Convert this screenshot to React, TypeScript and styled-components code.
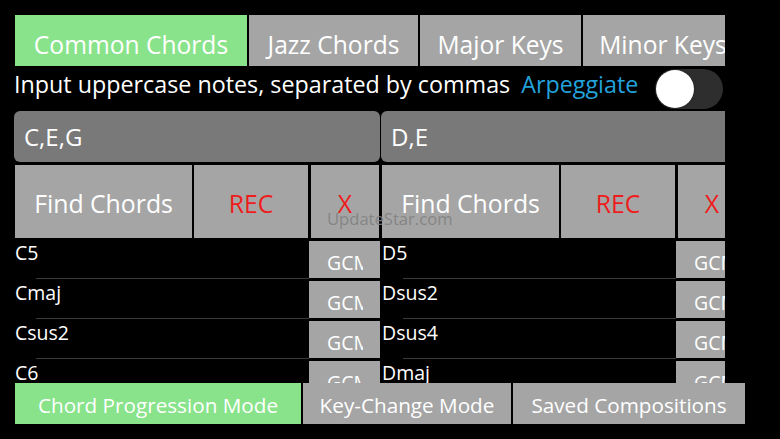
import React from "react";
import styled, { createGlobalStyle } from "styled-components";

const Global = createGlobalStyle`
  html, body { margin: 0; padding: 0; background: #000; }
  body { font-family: "Open Sans", "Noto Sans", sans-serif; color: #fff; overflow: hidden; }
  * { box-sizing: border-box; }
`;

const Screen = styled.div`
  position: relative;
  width: 780px;
  height: 439px;
  background: #000;
  padding: 15px 0 0 14px;
  display: flex;
  flex-direction: column;
`;

const Upper = styled.div`
  width: 711px;
  overflow: hidden;
  display: flex;
  flex-direction: column;
`;

const Tabs = styled.div`
  display: flex;
  gap: 2px;
  padding-left: 1px;
  height: 51px;
  flex-shrink: 0;
`;

const Tab = styled.div<{ $w: number; $active?: boolean }>`
  width: ${(p) => p.$w}px;
  flex-shrink: 0;
  background: ${(p) => (p.$active ? "#88e38b" : "#a5a5a5")};
  color: #fff;
  font-size: 24.6px;
  display: flex;
  align-items: center;
  justify-content: center;
  white-space: nowrap;
  overflow: hidden;
  padding-top: 7px;
`;

const InfoRow = styled.div`
  height: 45px;
  display: flex;
  align-items: center;
  font-size: 23.3px;
  white-space: nowrap;
`;

const Hint = styled.span`
  color: #fff;
  margin-bottom: 9px;
`;

const Link = styled.span`
  color: #22a3dc;
  margin-left: 11px;
  margin-bottom: 9px;
`;

const Track = styled.div`
  margin-left: auto;
  margin-right: 2px;
  width: 68px;
  height: 40px;
  border-radius: 20px;
  background: #2e2e2e;
  display: flex;
  align-items: center;
  padding-left: 1px;
`;

const Knob = styled.div`
  width: 38px;
  height: 38px;
  border-radius: 50%;
  background: #fff;
  box-shadow: 0 0 2px rgba(0, 0, 0, 0.6);
`;

const Panels = styled.div`
  display: flex;
  gap: 1px;
`;

const Panel = styled.div`
  width: 366px;
  flex-shrink: 0;
  display: flex;
  flex-direction: column;
`;

const Input = styled.div`
  height: 51px;
  border-radius: 6px;
  background: #797979;
  font-size: 24px;
  display: flex;
  align-items: center;
  padding: 0 0 0 10px;
`;

const Actions = styled.div`
  display: flex;
  margin-top: 3px;
  padding-left: 1px;
  height: 73px;
`;

const ActionBtn = styled.div<{ $w: number; $red?: boolean; $gap?: number }>`
  width: ${(p) => p.$w}px;
  margin-left: ${(p) => p.$gap ?? 0}px;
  flex-shrink: 0;
  background: #a5a5a5;
  color: ${(p) => (p.$red ? "#ee1c1c" : "#fff")};
  font-size: 24.8px;
  display: flex;
  align-items: center;
  justify-content: center;
  padding-top: 2px;
  white-space: nowrap;
`;

const List = styled.div`
  margin-top: 2px;
  height: 143px;
  overflow: hidden;
  display: flex;
  flex-direction: column;
`;

const Row = styled.div`
  height: 40px;
  flex-shrink: 0;
  display: flex;
`;

const NameCell = styled.div`
  flex: 1;
  display: flex;
  flex-direction: column;
  justify-content: space-between;
`;

const Name = styled.div`
  font-size: 19.5px;
  line-height: 22px;
  padding: 2px 0 0 1px;
`;

const Divider = styled.div`
  margin-left: 22px;
  height: 1px;
  background: #3a3a3a;
  margin-bottom: 1px;
`;

const GcmBtn = styled.div`
  width: 71px;
  height: 37px;
  margin-top: 1px;
  background: #a5a5a5;
  color: #fff;
  font-size: 19.5px;
  display: flex;
  align-items: center;
  padding: 5px 17px 0 18px;
  overflow: hidden;
  white-space: nowrap;
`;

const GcmText = styled.span`
  display: block;
  width: 100%;
  overflow: hidden;
`;

const BottomBar = styled.div`
  display: flex;
  gap: 2px;
  padding-left: 1px;
  height: 41px;
  flex-shrink: 0;
`;

const ModeBtn = styled.div<{ $w: number; $active?: boolean }>`
  width: ${(p) => p.$w}px;
  flex-shrink: 0;
  background: ${(p) => (p.$active ? "#88e38b" : "#a5a5a5")};
  color: #fff;
  font-size: 20.7px;
  display: flex;
  align-items: center;
  justify-content: center;
  padding-top: 2px;
  white-space: nowrap;
`;

const Watermark = styled.div`
  position: absolute;
  left: 327px;
  top: 207px;
  font-size: 16.6px;
  color: rgba(130, 130, 130, 0.92);
  pointer-events: none;
`;

const panels = [
  { input: "C,E,G", chords: ["C5", "Cmaj", "Csus2", "C6"] },
  { input: "D,E", chords: ["D5", "Dsus2", "Dsus4", "Dmaj"] },
];

export default function App() {
  return (
    <>
      <Global />
      <Screen>
        <Upper>
          <Tabs>
            <Tab $w={232} $active>Common Chords</Tab>
            <Tab $w={169}>Jazz Chords</Tab>
            <Tab $w={161}>Major Keys</Tab>
            <Tab $w={160}>Minor Keys</Tab>
          </Tabs>
          <InfoRow>
            <Hint>Input uppercase notes, separated by commas</Hint>
            <Link>Arpeggiate</Link>
            <Track>
              <Knob />
            </Track>
          </InfoRow>
          <Panels>
            {panels.map((p) => (
              <Panel key={p.input}>
                <Input>{p.input}</Input>
                <Actions>
                  <ActionBtn $w={177}>Find Chords</ActionBtn>
                  <ActionBtn $w={114} $gap={2} $red>REC</ActionBtn>
                  <ActionBtn $w={68} $gap={3} $red>X</ActionBtn>
                </Actions>
                <List>
                  {p.chords.map((c) => (
                    <Row key={c}>
                      <NameCell>
                        <Name>{c}</Name>
                        <Divider />
                      </NameCell>
                      <GcmBtn>
                        <GcmText>GCM</GcmText>
                      </GcmBtn>
                    </Row>
                  ))}
                </List>
              </Panel>
            ))}
          </Panels>
        </Upper>
        <BottomBar>
          <ModeBtn $w={286} $active>Chord Progression Mode</ModeBtn>
          <ModeBtn $w={208}>Key-Change Mode</ModeBtn>
          <ModeBtn $w={232}>Saved Compositions</ModeBtn>
        </BottomBar>
        <Watermark>UpdateStar.com</Watermark>
      </Screen>
    </>
  );
}
